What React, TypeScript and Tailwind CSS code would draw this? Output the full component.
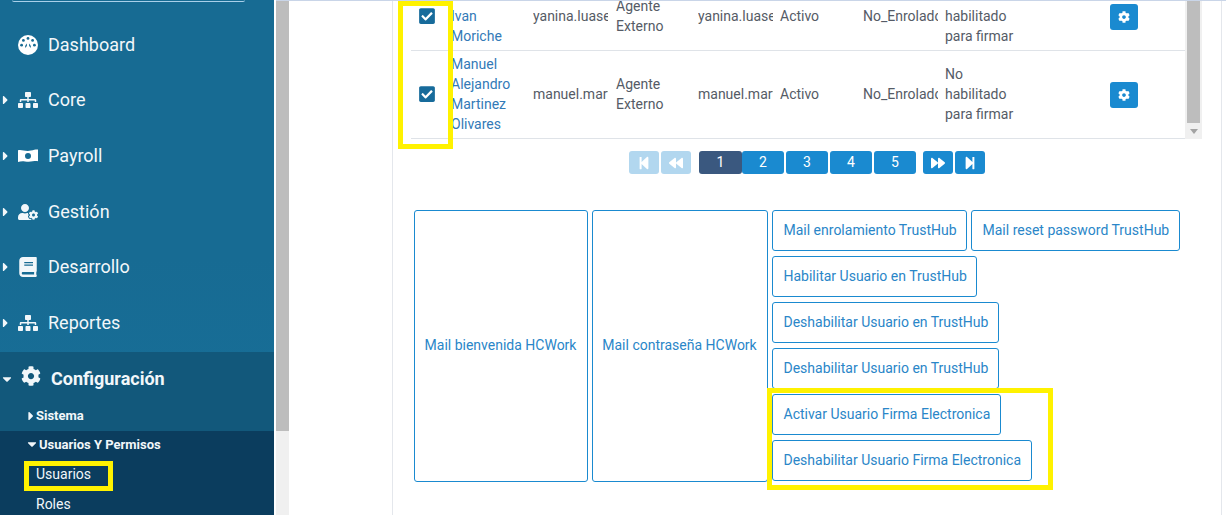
import type { ReactNode } from 'react'
import {
  FaBackward,
  FaBook,
  FaCaretDown,
  FaCaretRight,
  FaCheckSquare,
  FaCog,
  FaForward,
  FaSitemap,
  FaStepBackward,
  FaStepForward,
  FaUserCog,
} from 'react-icons/fa'

const font = { fontFamily: 'Roboto, sans-serif' }

function DashboardIcon() {
  return (
    <svg
      width="20"
      height="20"
      viewBox="0 0 20 20"
    >
      <circle
        cx="10"
        cy="10"
        r="10"
        fill="#fff"
      />
      <g fill="#176b93">
        <circle
          cx="10"
          cy="3.4"
          r="1.4"
        />
        <circle
          cx="5.4"
          cy="5.4"
          r="1.4"
        />
        <circle
          cx="14.6"
          cy="5.4"
          r="1.4"
        />
        <circle
          cx="3.6"
          cy="10.2"
          r="1.4"
        />
        <circle
          cx="16.4"
          cy="10.2"
          r="1.4"
        />
        <path d="M7 12.5C7.2 10.6 8 9.4 8.9 8.6V13.2ZM13 12.5C12.8 10.6 12 9.4 11.1 8.6V13.2Z" />
      </g>
      <circle
        cx="10"
        cy="13.5"
        r="2.6"
        fill="#fff"
      />
    </svg>
  )
}

function BillIcon() {
  return (
    <svg
      width="20"
      height="14"
      viewBox="0 0 20 14"
    >
      <path
        fill="#fff"
        fillRule="evenodd"
        d="M0 1.2C4 .2 7 2.8 13 1.6 16 1 18 .3 20 .6V12.2C16 11.6 13 13.4 7 12.4 4 11.9 2 12.4 0 13ZM10 4a3 3 0 1 0 0 6 3 3 0 0 0 0-6Z"
      />
    </svg>
  )
}

const menu: { label: string; icon: ReactNode; caret?: boolean }[] = [
  { label: 'Dashboard', icon: <DashboardIcon /> },
  { label: 'Core', icon: <FaSitemap size={20} />, caret: true },
  { label: 'Payroll', icon: <BillIcon />, caret: true },
  { label: 'Gestión', icon: <FaUserCog size={20} />, caret: true },
  { label: 'Desarrollo', icon: <FaBook size={20} />, caret: true },
  { label: 'Reportes', icon: <FaSitemap size={20} />, caret: true },
]

const actions = [
  'Mail enrolamiento TrustHub',
  'Mail reset password TrustHub',
  'Habilitar Usuario en TrustHub',
  'Deshabilitar Usuario en TrustHub',
  'Deshabilitar Usuario en TrustHub',
  'Activar Usuario Firma Electronica',
  'Deshabilitar Usuario Firma Electronica',
]

const rows = [
  {
    name: ['Yanina', 'Ivan', 'Moriche'],
    user: 'yanina.luaselli',
    firma: ['No', 'habilitado', 'para firmar'],
    height: 'h-[69px]',
  },
  {
    name: ['Manuel', 'Alejandro', 'Martinez', 'Olivares'],
    user: 'manuel.martinez',
    firma: ['No', 'habilitado', 'para firmar'],
    height: 'h-[88px] pb-[1px]',
  },
]

function Sidebar() {
  return (
    <aside className="flex h-full w-[274px] shrink-0 flex-col overflow-hidden bg-gradient-to-b from-[#176b93] from-50% to-[#18709a] text-[#f2f7fa]">
      <div className="mx-3 h-[2px] w-[233px] shrink-0 rounded-b border-b border-[#a9d0ea]" />
      <nav className="mt-[15px] flex shrink-0 flex-col">
        {menu.map(item => (
          <div
            key={item.label}
            className="flex h-[55.67px] items-center"
          >
            <span className="flex w-[11px] justify-center">
              {item.caret && <FaCaretRight size={14} />}
            </span>
            <span className="ml-[7px] flex w-[20px] justify-center">{item.icon}</span>
            <span className="ml-[10px] text-[18px] leading-none">{item.label}</span>
          </div>
        ))}
      </nav>
      <div className="mt-[1px] h-[79px] shrink-0 bg-[#12587b]">
        <div className="flex h-[54px] items-center">
          <span className="flex w-[14px] justify-center">
            <FaCaretDown size={14} />
          </span>
          <span className="mb-[5px] ml-[7px] flex w-[20px] justify-center">
            <FaCog size={20} />
          </span>
          <span className="ml-[10px] text-[18px] leading-none font-bold">Configuración</span>
        </div>
        <div className="flex items-center pl-[24px] text-[13px] leading-5 font-bold">
          <FaCaretRight size={14} />
          <span className="-ml-[2px]">Sistema</span>
        </div>
      </div>
      <div className="flex-1 bg-[#0b3d5e]">
        <div className="flex h-[27px] items-center pl-[25px] text-[13px] font-bold">
          <FaCaretDown size={14} />
          <span>Usuarios Y Permisos</span>
        </div>
        <div className="pl-[36px] text-[14px] leading-[30px]">
          <div className="mt-[1px]">Usuarios</div>
          <div>Roles</div>
        </div>
      </div>
    </aside>
  )
}

function UserRow({ row }: { row: (typeof rows)[number] }) {
  return (
    <div className={`flex items-center border-b border-[#dfe3e8] ${row.height}`}>
      <span className="flex w-[32px] shrink-0 justify-center text-[#176b9b]">
        <FaCheckSquare size={18} />
      </span>
      <div className="ml-[8px] w-[82px] shrink-0 text-[#337ab7]">
        {row.name.map(line => (
          <div key={line}>{line}</div>
        ))}
      </div>
      <div className="w-[75px] shrink-0 overflow-hidden whitespace-nowrap">{row.user}</div>
      <div className="ml-[8px] w-[82px] shrink-0">
        <div>Agente</div>
        <div>Externo</div>
      </div>
      <div className="w-[75px] shrink-0 overflow-hidden whitespace-nowrap">{row.user}</div>
      <div className="ml-[7px] w-[83px] shrink-0">Activo</div>
      <div className="w-[75px] shrink-0 overflow-hidden whitespace-nowrap">No_Enrolado</div>
      <div className="ml-[7px] w-[165px] shrink-0">
        {row.firma.map(line => (
          <div key={line}>{line}</div>
        ))}
      </div>
      <span className="mt-[1px] flex h-[26px] w-[28px] items-center justify-center rounded-[3px] bg-[#1a8ad0] text-white">
        <FaCog size={12} />
      </span>
    </div>
  )
}

function UsersTable() {
  return (
    <div className="flex h-[139px] overflow-hidden">
      <div className="w-[774px] shrink-0 text-[14px] leading-5 text-[#555b66]">
        <div className="-mt-[19px]">
          {rows.map(row => (
            <UserRow
              key={row.user}
              row={row}
            />
          ))}
        </div>
      </div>
      <div className="flex h-[138px] w-[17px] flex-col bg-[#f0f0f0] px-[2px]">
        <div className="h-[122px] bg-[#bdbdbd]" />
        <div className="mx-auto mt-[6px] h-0 w-0 border-x-[4px] border-t-[5px] border-x-transparent border-t-[#a3a3a3]" />
      </div>
    </div>
  )
}

function PageButton({ children, muted, className }: { children: ReactNode; muted?: boolean; className?: string }) {
  return (
    <span className={`flex h-[23px] w-[30px] items-center justify-center rounded-[3px] text-[14px] text-white ${muted ? 'bg-[#b2d7ef]' : 'bg-[#1a8ad0]'} ${className ?? ''}`}>
      {children}
    </span>
  )
}

function Pagination() {
  return (
    <div className="mt-[11px] ml-[218px] flex">
      <div className="flex gap-[2px]">
        <PageButton muted>
          <FaStepBackward size={14} />
        </PageButton>
        <PageButton muted>
          <FaBackward size={14} />
        </PageButton>
      </div>
      <div className="mr-[7px] ml-[8px] flex gap-[2px]">
        <PageButton className="-mr-[2px] w-[43px] !bg-[#3a587f]">1</PageButton>
        {['2', '3', '4', '5'].map(n => (
          <PageButton
            key={n}
            className="w-[42px]"
          >
            {n}
          </PageButton>
        ))}
      </div>
      <div className="flex gap-[2px]">
        <PageButton>
          <FaForward size={14} />
        </PageButton>
        <PageButton>
          <FaStepForward size={14} />
        </PageButton>
      </div>
    </div>
  )
}

function ActionButton({ label, className }: { label: string; className?: string }) {
  return (
    <button className={`flex items-center justify-center rounded-[3px] border border-[#1a8ad0] bg-white pr-[9.5px] pl-[10.5px] text-[14px] whitespace-nowrap text-[#2a86c8] ${className ?? ''}`}>
      {label}
    </button>
  )
}

export default function App() {
  return (
    <div
      style={font}
      className="relative flex h-[515px] w-[1226px] overflow-hidden bg-white"
    >
      <Sidebar />
      <div className="ml-[2px] flex h-full w-[13px] shrink-0 flex-col border-t border-[#c9d5e8] bg-[#f0f0f0]">
        <div className="h-[430px] bg-[#bdbdbd]" />
      </div>
      <main className="flex-1 border-t border-[#c9d5e8] pl-[103px]">
        <div className="h-full w-[830px] border-x border-[#e4e7ec] pl-[18px]">
          <UsersTable />
          <Pagination />
          <div className="mt-[36px] ml-[3px] flex gap-[4px]">
            <ActionButton
              label="Mail bienvenida HCWork"
              className="h-[272px] w-[174px] !pr-[11px] !pl-[10px] pb-[2px]"
            />
            <ActionButton
              label="Mail contraseña HCWork"
              className="h-[272px] w-[176px] !pr-[11px] !pl-[10px] pb-[2px]"
            />
            <div className="flex w-[415px] flex-wrap content-start gap-x-[4px] gap-y-[5px]">
              {actions.map((label, i) => (
                <ActionButton
                  key={label + i}
                  label={label}
                  className="h-[41px]"
                />
              ))}
            </div>
          </div>
        </div>
      </main>
      <div className="pointer-events-none absolute top-[1px] left-[398px] h-[148px] w-[55px] border-[5px] border-[#fff200]" />
      <div className="pointer-events-none absolute top-[461px] left-[24px] h-[30px] w-[89px] border-[5px] border-[#fff200]" />
      <div className="pointer-events-none absolute top-[388px] left-[767px] h-[102px] w-[286px] border-[5px] border-[#fff200]" />
    </div>
  )
}
